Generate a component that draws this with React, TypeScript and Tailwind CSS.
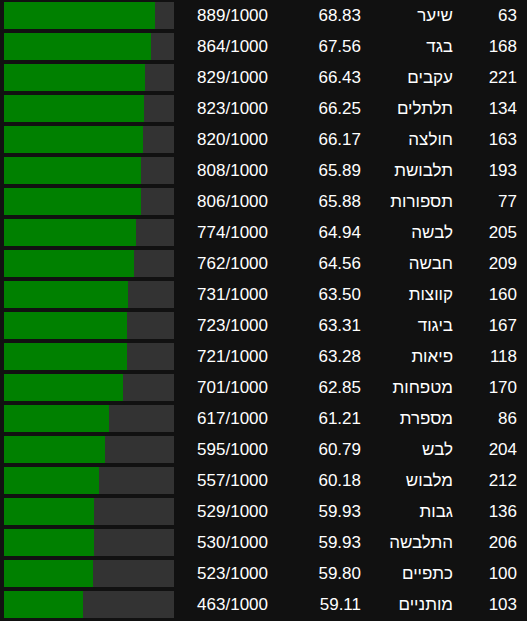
import React from 'react';

type Row = { id: number; word: string; score: string; votes: number };

const ROWS: Row[] = [
  { id: 63, word: 'שיער', score: '68.83', votes: 889 },
  { id: 168, word: 'בגד', score: '67.56', votes: 864 },
  { id: 221, word: 'עקבים', score: '66.43', votes: 829 },
  { id: 134, word: 'תלתלים', score: '66.25', votes: 823 },
  { id: 163, word: 'חולצה', score: '66.17', votes: 820 },
  { id: 193, word: 'תלבושת', score: '65.89', votes: 808 },
  { id: 77, word: 'תספורות', score: '65.88', votes: 806 },
  { id: 205, word: 'לבשה', score: '64.94', votes: 774 },
  { id: 209, word: 'חבשה', score: '64.56', votes: 762 },
  { id: 160, word: 'קווצות', score: '63.50', votes: 731 },
  { id: 167, word: 'ביגוד', score: '63.31', votes: 723 },
  { id: 118, word: 'פיאות', score: '63.28', votes: 721 },
  { id: 170, word: 'מטפחות', score: '62.85', votes: 701 },
  { id: 86, word: 'מספרת', score: '61.21', votes: 617 },
  { id: 204, word: 'לבש', score: '60.79', votes: 595 },
  { id: 212, word: 'מלבוש', score: '60.18', votes: 557 },
  { id: 136, word: 'גבות', score: '59.93', votes: 529 },
  { id: 206, word: 'התלבשה', score: '59.93', votes: 530 },
  { id: 100, word: 'כתפיים', score: '59.80', votes: 523 },
  { id: 103, word: 'מותניים', score: '59.11', votes: 463 },
];

const ScoreBar = ({ votes }: { votes: number }) => (
  <div className="h-[27px] w-[170px] bg-[#333333]">
    <div className="h-full bg-[#008000]" style={{ width: `${(votes / 1000) * 100}%` }} />
  </div>
);

export default function App() {
  return (
    <div
      className="min-h-screen bg-[#111111] text-[17px] text-white"
      style={{ fontFamily: '"Liberation Sans", Arial, sans-serif' }}
    >
      {ROWS.map((row) => (
        <div key={row.id} className="flex h-[31px] items-center">
          <div className="w-[184px] pl-[4px]">
            <ScoreBar votes={row.votes} />
          </div>
          <div className="w-[84px] text-right">{row.votes}/1000</div>
          <div className="w-[93px] text-right">{row.score}</div>
          <div className="w-[92px] text-right" dir="rtl">
            {row.word}
          </div>
          <div className="w-[64px] text-right">{row.id}</div>
        </div>
      ))}
    </div>
  );
}
